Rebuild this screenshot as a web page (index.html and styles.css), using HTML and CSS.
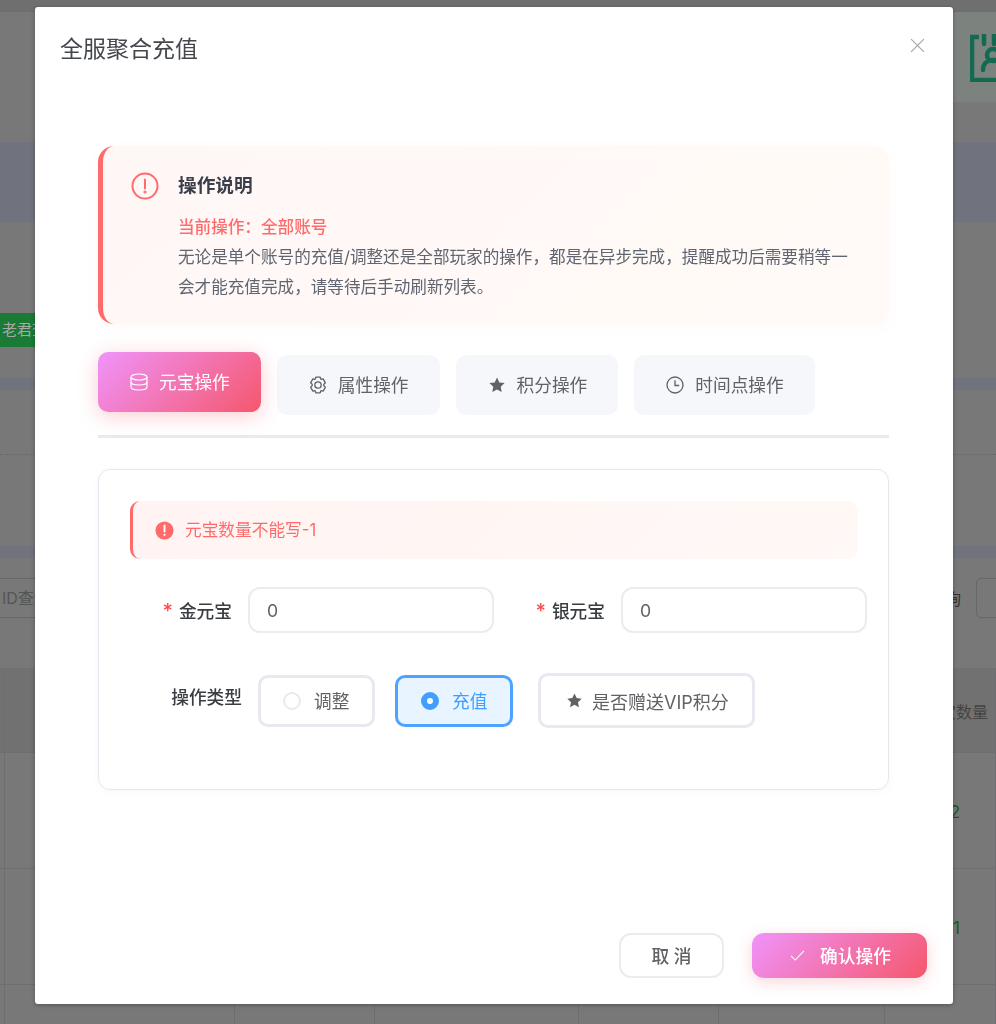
FILE: index.html
```html
<!DOCTYPE html>
<html lang="zh-CN">
<head>
  <meta charset="UTF-8">
  <meta name="viewport" content="width=device-width, initial-scale=1.0">
  <title>全服聚合充值</title>
  <link rel="stylesheet" href="styles.css">
</head>
<body>

  <!-- 背景页面 -->
  <main class="page">
    <div class="page__top"></div>
    <div class="stat-cards">
      <div class="stat-card">
        <svg class="stat-card__icon" viewBox="0 0 50 48" fill="none" stroke="#136a50" stroke-width="4.500">
          <path d="M9 3H2v43h48"/>
          <path d="M14 0v10M24 0v10" stroke-linecap="round"/>
          <circle cx="23" cy="21" r="6"/>
          <path d="M13 36c0-7 5-10 10-10s10 3 10 10" stroke-linecap="round"/>
        </svg>
      </div>
    </div>
    <div class="band band--big"></div>
    <div class="tag-row"><span class="tag">老君查询</span></div>
    <div class="band"></div>
    <div class="line-row"></div>
    <div class="band band--after"></div>
    <div class="search-row">
      <div class="search-input">ID查询</div>
      <div class="search-right"><span>查询</span><div class="search-box"></div></div>
    </div>
    <div class="table">
      <div class="cell cell--head"></div><div class="cell cell--head"></div><div class="cell cell--head"></div>
      <div class="cell cell--head"></div><div class="cell cell--head"></div><div class="cell cell--head"></div>
      <div class="cell cell--head cell--last">元宝数量</div>
      <div class="cell"></div><div class="cell"></div><div class="cell"></div>
      <div class="cell"></div><div class="cell"></div><div class="cell"></div>
      <div class="cell cell--num">2</div>
      <div class="cell"></div><div class="cell"></div><div class="cell"></div>
      <div class="cell"></div><div class="cell"></div><div class="cell"></div>
      <div class="cell cell--num">1</div>
      <div class="cell"></div><div class="cell"></div><div class="cell"></div>
      <div class="cell"></div><div class="cell"></div><div class="cell"></div>
      <div class="cell"></div>
    </div>
  </main>

  <!-- 弹窗 -->
  <div class="overlay">
    <div class="modal">
      <header class="modal__header">
        <h1 class="modal__title">全服聚合充值</h1>
        <svg class="modal__close" viewBox="0 0 14 14" fill="none" stroke="#a3a6ad" stroke-width="1.100">
          <path d="M1 1l12 12M13 1L1 13"/>
        </svg>
      </header>

      <div class="modal__body">
        <section class="notice">
          <svg class="notice__icon" viewBox="0 0 28 28" fill="none" stroke="#ff6b6b" stroke-width="2">
            <circle cx="14" cy="14" r="12.500"/>
            <path d="M14 7.500v9" stroke-linecap="round"/>
            <circle cx="14" cy="20" r="0.600" fill="#ff6b6b"/>
          </svg>
          <div>
            <h2 class="notice__title">操作说明</h2>
            <p class="notice__current">当前操作：全部账号</p>
            <p class="notice__text">无论是单个账号的充值/调整还是全部玩家的操作，都是在异步完成，提醒成功后需要稍等一会才能充值完成，请等待后手动刷新列表。</p>
          </div>
        </section>

        <nav class="tabs">
          <div class="tab tab--active">
            <svg class="tab__icon" viewBox="0 0 18 18" fill="none" stroke="currentColor" stroke-width="1.200">
              <ellipse cx="9" cy="4" rx="8" ry="3"/>
              <path d="M1 4v5c0 1.700 3.600 3 8 3s8-1.300 8-3V4"/>
              <path d="M1 9v5c0 1.700 3.600 3 8 3s8-1.300 8-3V9"/>
            </svg>
            <span>元宝操作</span>
          </div>
          <div class="tab">
            <svg class="tab__icon" viewBox="0 0 18 18" fill="none" stroke="currentColor" stroke-width="1.300">
              <path d="M6.800 1.200h4.400l.7 2.200 2.200-.5 2.200 3.800-1.500 1.700 0 1.200 1.500 1.700-2.200 3.800-2.200-.5-.7 2.200H6.800l-.7-2.200-2.200.5-2.200-3.800L3.200 9.600l0-1.200L1.700 6.700l2.200-3.800 2.200.5z" stroke-linejoin="round"/>
              <circle cx="9" cy="9" r="3.200"/>
            </svg>
            <span>属性操作</span>
          </div>
          <div class="tab">
            <svg class="tab__icon" viewBox="0 0 18 18" fill="currentColor">
              <path d="M9 1.500l2.300 4.900 5.300.7-3.900 3.700 1 5.300L9 13.500l-4.700 2.600 1-5.300-3.900-3.700 5.300-.7z"/>
            </svg>
            <span>积分操作</span>
          </div>
          <div class="tab">
            <svg class="tab__icon" viewBox="0 0 18 18" fill="none" stroke="currentColor" stroke-width="1.300">
              <circle cx="9" cy="9" r="8"/>
              <path d="M9 4.200V9.500h4.200"/>
            </svg>
            <span>时间点操作</span>
          </div>
        </nav>

        <div class="divider"></div>

        <section class="panel">
          <div class="warn">
            <svg class="warn__icon" viewBox="0 0 20 20">
              <circle cx="10" cy="10" r="9.500" fill="#ff6b6b"/>
              <path d="M10 4.800v6.200" stroke="#fff" stroke-width="2" stroke-linecap="round"/>
              <circle cx="10" cy="14.500" r="1.200" fill="#fff"/>
            </svg>
            <span>元宝数量不能写-1</span>
          </div>

          <div class="form-row">
            <div class="field">
              <label class="field__label"><i>*</i>金元宝</label>
              <div class="field__input">0</div>
            </div>
            <div class="field">
              <label class="field__label"><i>*</i>银元宝</label>
              <div class="field__input">0</div>
            </div>
          </div>

          <div class="type-row">
            <span class="type-row__label">操作类型</span>
            <div class="choice choice--adjust"><span class="radio"></span>调整</div>
            <div class="choice choice--on"><span class="radio radio--on"></span>充值</div>
            <div class="choice choice--vip">
              <svg class="choice__star" viewBox="0 0 18 18" fill="currentColor">
                <path d="M9 1.500l2.300 4.900 5.300.7-3.900 3.700 1 5.300L9 13.500l-4.700 2.600 1-5.300-3.900-3.700 5.300-.7z"/>
              </svg>
              <span>是否赠送VIP积分</span>
            </div>
          </div>
        </section>
      </div>

      <footer class="modal__footer">
        <button class="btn">取 消</button>
        <button class="btn btn--primary">
          <svg class="btn__check" viewBox="0 0 16 12" fill="none" stroke="currentColor" stroke-width="1.200">
            <path d="M1 6.500l4.500 4.500L15 1"/>
          </svg>
          <span>确认操作</span>
        </button>
      </footer>
    </div>
  </div>

</body>
</html>
```

FILE: styles.css
```css
*{margin:0;padding:0;box-sizing:border-box;}
html,body{height:100%;overflow:hidden;}
body{background:#787878;font-family:Inter,"Noto Sans CJK SC",sans-serif;color:#3a3d42;}

/* 背景页面 */
.page{height:1024px;overflow:hidden;}
.page__top{height:12px;background:#6f6f6f;}
.stat-cards{display:flex;justify-content:flex-end;height:90px;margin-bottom:40px;}
.stat-card{width:120px;background:#7c837f;padding:22px 0 0 94px;overflow:hidden;}
.stat-card__icon{display:block;width:50px;height:48px;}
.band{height:12px;background:#70737d;}
.band--big{height:80px;}
.band--after{margin-top:91px;}
.tag-row{height:156px;padding-top:91px;}
.tag{display:block;width:70px;height:34px;background:#1a7a36;color:#a4aba4;font-size:15px;line-height:34px;padding-left:2px;white-space:nowrap;}
.line-row{height:65px;border-bottom:1px dotted #666;}
.search-row{display:flex;justify-content:space-between;margin-top:20px;height:40px;margin-bottom:50px;}
.search-input{width:200px;padding-left:2px;border:1px solid #676767;border-left:0;line-height:38px;font-size:16px;color:#555;}
.search-right{display:flex;gap:15px;align-items:center;color:#333;font-size:16px;margin-right:-30px;}
.search-box{width:50px;height:40px;border:1px solid #676767;border-radius:5px;}
.table{display:grid;grid-template-columns:5px 230px 140px 204px 140px 166px 111px;grid-template-rows:85px 116px 116px 40px;}
.cell{border-right:1px solid #6b6f70;border-bottom:1px solid #6b6f70;}
.cell--head{background:#717171;}
.cell--last{text-align:right;padding-right:7px;line-height:88px;font-size:16px;color:#444;}
.cell--num{text-align:right;padding-right:35px;line-height:118px;font-size:17px;color:#1a5c1a;}

/* 弹窗 */
.overlay{position:fixed;inset:0;padding:7px 43px 20px 35px;}
.modal{height:100%;background:#fff;border-radius:3px;display:flex;flex-direction:column;box-shadow:0 1px 4px rgba(0,0,0,.3);}
.modal__header{display:flex;justify-content:space-between;align-items:flex-start;padding:26px 28px 0 25px;height:139px;}
.modal__title{font-size:23px;font-weight:400;line-height:32px;color:#44474c;}
.modal__close{width:15px;height:15px;margin-top:5px;}
.modal__body{padding:0 64px 0 63px;}

.notice{display:flex;gap:19px;height:178px;padding:26px 32px 0 28px;border-left:5px solid #ff6b6b;border-radius:16px;background:linear-gradient(135deg,#fff7f6,#fffaf7);box-shadow:0 4px 14px rgba(255,107,107,.04);}
.notice__icon{flex:none;width:28px;height:28px;}
.notice__title{font-size:18.700px;font-weight:600;line-height:28px;color:#3a3f4a;margin-bottom:12px;}
.notice__current{font-size:16.600px;font-weight:500;line-height:30px;color:#ff6b6b;}
.notice__text{font-size:16.600px;line-height:30px;color:#5f6672;}

.tabs{display:flex;gap:16px;margin-top:31px;}
.tab{display:flex;align-items:center;gap:11px;height:60px;padding:0 31px 2px 32px;border-radius:10px;background:#f5f7fa;color:#606266;font-size:17.700px;white-space:nowrap;}
.tab--active{transform:translateY(-3px);color:#fff;background:linear-gradient(135deg,#f093fb,#f5576c);box-shadow:0 4px 20px rgba(245,87,108,.3);}
.tab__icon{flex:none;width:18px;height:18px;margin-top:2px;}
.divider{height:3px;margin-top:20px;background:#e9e9ef;}

.panel{height:321px;margin-top:31px;padding:31px 30px 0 31px;border:1px solid #e6e6ee;border-radius:12px;box-shadow:0 2px 8px rgba(0,0,0,.03);}
.warn{display:flex;align-items:center;gap:11px;height:58px;padding:0 0 2px 22px;border-left:3px solid #ff6b6b;border-radius:10px;background:linear-gradient(135deg,#fff4f3,#fff9f6);color:#ff6b6b;font-size:16.700px;}
.warn__icon{width:19px;height:19px;margin-top:2px;}

.form-row{display:flex;margin-top:28px;}
.field{flex:none;display:flex;align-items:center;width:373px;}
.field__label{flex:none;width:118px;padding-right:16px;text-align:right;font-size:17.700px;font-weight:500;color:#3a3d42;white-space:nowrap;}
.field__label i{color:#ff4d4f;font-style:normal;font-size:20px;line-height:20px;margin-right:6px;}
.field__input{flex:none;width:246px;height:46px;padding-left:17px;border:2px solid #ebebf2;border-radius:12px;font-size:17.700px;line-height:44px;color:#606266;background:#fff;}

.type-row{display:flex;align-items:flex-start;margin-top:42px;}
.type-row__label{flex:none;width:112px;margin-top:11px;text-align:right;font-size:17.700px;font-weight:500;line-height:24px;white-space:nowrap;}
.choice{flex:none;display:flex;align-items:center;height:52px;padding-bottom:2px;border:3px solid #e8e8f0;border-radius:10px;font-size:17.700px;color:#606266;background:#fff;white-space:nowrap;}
.choice--adjust{width:117px;margin-left:16px;padding-left:22px;gap:13px;}
.choice--on{width:118px;margin-left:20px;padding-left:23px;gap:13px;border-color:#4da3ff;background:#e8f4ff;color:#409eff;}
.choice--vip{width:217px;height:55px;margin-left:25px;margin-top:-2px;padding:0 0 0 25px;gap:9px;font-size:18px;}
.choice__star{width:17px;height:17px;}
.radio{display:block;width:18px;height:18px;margin-top:2px;border:2px solid #e8eaf0;border-radius:50%;background:#fff;}
.radio--on{border:6px solid #409eff;}

.modal__footer{display:flex;justify-content:flex-end;gap:28px;margin-top:auto;padding:0 26px 26px 0;}
.btn{display:flex;align-items:center;justify-content:center;width:105px;height:45px;padding-bottom:2px;border:2px solid #ebebf2;border-radius:12px;background:#fff;color:#606266;font:500 17.700px Inter,"Noto Sans CJK SC",sans-serif;}
.btn--primary{width:175px;gap:15px;padding-left:2px;border:0;color:#fff;background:linear-gradient(135deg,#f093fb,#f5576c);box-shadow:0 4px 15px rgba(245,87,108,.25);}
.btn__check{width:15px;height:11px;margin-top:2px;}
```
